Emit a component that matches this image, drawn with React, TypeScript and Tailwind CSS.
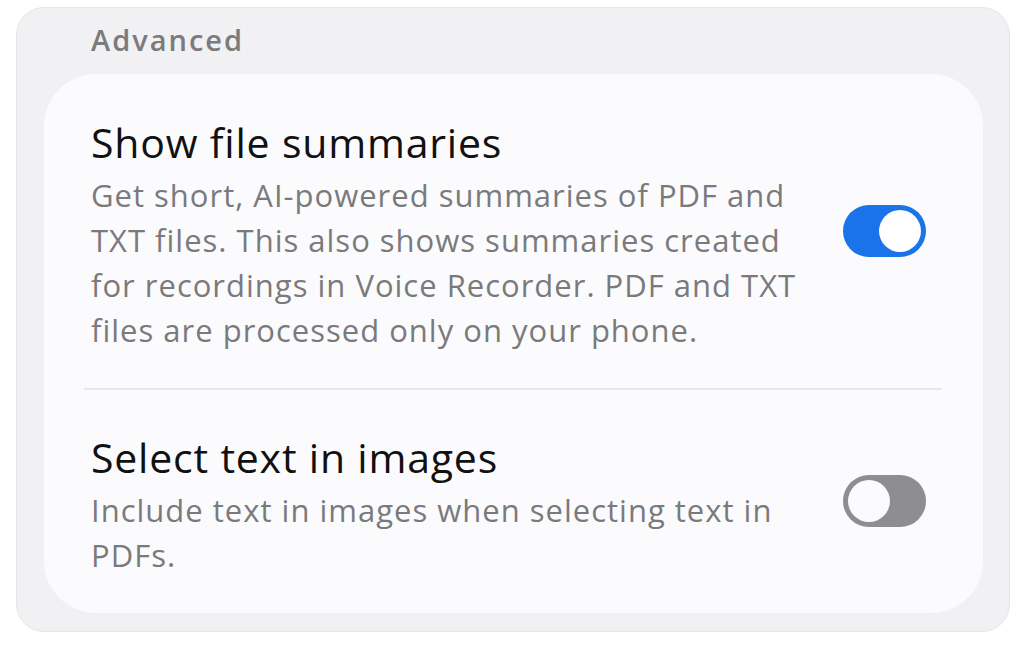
import React from "react";

function Toggle({ on }: { on: boolean }) {
  return on ? (
    <div className="flex h-[52px] w-[83px] shrink-0 items-center justify-end rounded-full bg-[#1a73e8] pr-[5px]">
      <div className="h-[42px] w-[42px] rounded-full bg-white" />
    </div>
  ) : (
    <div className="flex h-[52px] w-[83px] shrink-0 items-center justify-start rounded-full bg-[#8e8e90] pl-[5px]">
      <div className="h-[42px] w-[42px] rounded-full bg-[#fbfbfd]" />
    </div>
  );
}

function Row({
  title,
  desc,
  on,
}: {
  title: string;
  desc: React.ReactNode;
  on: boolean;
}) {
  return (
    <div className="flex items-center">
      <div className="w-[720px]">
        <div className="text-[41px] leading-[48px] tracking-[0.8px] text-[#111111]">{title}</div>
        <div className="mt-[7px] text-[31px] leading-[45px] tracking-[1px] text-[#7a7a7c]">{desc}</div>
      </div>
      <div className="mb-[10px] ml-[32px]">
        <Toggle on={on} />
      </div>
    </div>
  );
}

export default function App() {
  return (
    <div
      className="h-[649px] w-[1024px] bg-white pl-[16px] pt-[7px]"
      style={{ fontFamily: "'Open Sans', Roboto, sans-serif" }}
    >
      <div className="h-[625px] w-[994px] rounded-[28px] border border-[#e6e6e8] bg-[#f1f1f3] pl-[27px] pt-[14px]">
        <div className="pl-[47px] text-[29px] font-semibold leading-[36px] tracking-[2px] text-[#7b7b7d]">Advanced</div>
        <div className="mt-[16px] h-[539px] w-[939px] rounded-[52px] bg-[#fbfbfd] pl-[47px] pr-[41px] pt-[44px]">
          <Row
            title="Show file summaries"
            on={true}
            desc={
              <>
                Get short, AI-powered summaries of PDF and
                <br />
                TXT files. This also shows summaries created
                <br />
                for recordings in Voice Recorder. PDF and TXT
                <br />
                files are processed only on your phone.
              </>
            }
          />
          <div className="mt-[35px] ml-[-7px] h-[2px] w-[858px] bg-[#e8e8ea]" />
          <div className="mt-[43px]">
            <Row
              title="Select text in images"
              on={false}
              desc={
                <>
                  Include text in images when selecting text in
                  <br />
                  PDFs.
                </>
              }
            />
          </div>
        </div>
      </div>
    </div>
  );
}
